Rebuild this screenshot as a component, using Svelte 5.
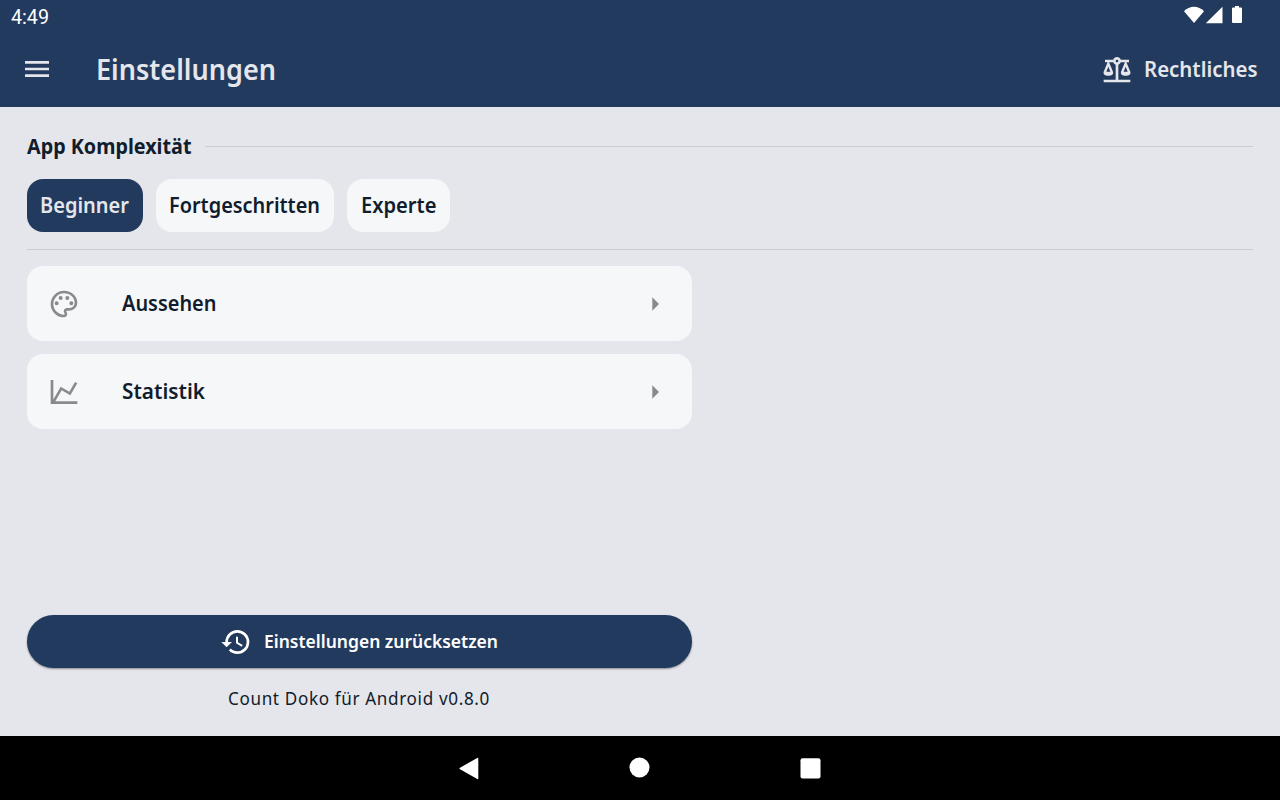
<script>
  const levels = [
    { name: 'Beginner', width: 89, active: true },
    { name: 'Fortgeschritten', width: 151 },
    { name: 'Experte', width: 75.5 }
  ];

  const paths = {
    menu: 'M3 6h18v2H3zM3 11h18v2H3zM3 16h18v2H3z',
    scale: 'M12,3C10.73,3 9.6,3.8 9.18,5H3V7H4.95L2,14C1.53,16 3,17 5.5,17C8,17 9.56,16 9,14L6.05,7H9.17C9.5,7.85 10.15,8.5 11,8.83V20H2V22H22V20H13V8.82C13.85,8.5 14.5,7.85 14.82,7H17.95L15,14C14.53,16 16,17 18.5,17C21,17 22.56,16 22,14L19.05,7H21V5H14.83C14.4,3.8 13.27,3 12,3M12,5A1,1 0 0,1 13,6A1,1 0 0,1 12,7A1,1 0 0,1 11,6A1,1 0 0,1 12,5M5.5,10.25L7,14H4L5.5,10.25M18.5,10.25L20,14H17L18.5,10.25Z',
    palette: 'M12,22A10,10 0 0,1 2,12C2,6.5 6.5,2 12,2C17.5,2 22,6 22,11A6,6 0 0,1 16,17H14.2C13.9,17 13.7,17.2 13.7,17.5C13.7,17.6 13.8,17.7 13.8,17.8C14.2,18.3 14.4,18.9 14.4,19.5C14.5,20.9 13.4,22 12,22M12,4A8,8 0 0,0 4,12A8,8 0 0,0 12,20C12.3,20 12.5,19.8 12.5,19.5C12.5,19.3 12.4,19.2 12.4,19.1C12,18.6 11.8,18.1 11.8,17.5C11.8,16.1 12.9,15 14.3,15H16A4,4 0 0,0 20,11C20,7.1 16.4,4 12,4M6.5,10A1.5,1.5 0 0,1 8,11.5A1.5,1.5 0 0,1 6.5,13A1.5,1.5 0 0,1 5,11.5A1.5,1.5 0 0,1 6.5,10M9.5,6A1.5,1.5 0 0,1 11,7.5A1.5,1.5 0 0,1 9.5,9A1.5,1.5 0 0,1 8,7.5A1.5,1.5 0 0,1 9.5,6M14.5,6A1.5,1.5 0 0,1 16,7.5A1.5,1.5 0 0,1 14.5,9A1.5,1.5 0 0,1 13,7.5A1.5,1.5 0 0,1 14.5,6M17.5,10A1.5,1.5 0 0,1 19,11.5A1.5,1.5 0 0,1 17.5,13A1.5,1.5 0 0,1 16,11.5A1.5,1.5 0 0,1 17.5,10Z',
    chart: 'M16,11.78L20.24,4.45L21.97,5.45L16.74,14.5L10.23,10.75L5.46,19H22V21H2V3H4V17.54L9.5,8L16,11.78Z',
    right: 'M10,17L15,12L10,7V17Z',
    history: 'M13.5,8H12V13L16.28,15.54L17,14.33L13.5,12.25V8M13,3A9,9 0 0,0 4,12H1L4.96,16.03L9,12H6A7,7 0 0,1 13,5A7,7 0 0,1 20,12A7,7 0 0,1 13,19C11.07,19 9.32,18.21 8.06,16.94L6.64,18.36C8.27,20 10.5,21 13,21A9,9 0 0,0 22,12A9,9 0 0,0 13,3'
  };

  const entries = [
    { name: 'Aussehen', width: 94.5, icon: paths.palette },
    { name: 'Statistik', width: 83, icon: paths.chart }
  ];
</script>

{#snippet icon(d)}
  <svg class="icon" viewBox="0 0 24 24"><path {d} fill="currentColor" /></svg>
{/snippet}

{#snippet label(text, width, kind)}
  <svg class="label {kind}" {width} height="30">
    <text x="0" y="23" textLength={width} lengthAdjust="spacingAndGlyphs">{text}</text>
  </svg>
{/snippet}

<div class="screen">
  <div class="status">
    {@render label('4:49', 38, 'clock')}
    <svg class="signals" width="60" height="20" viewBox="0 0 60 20" fill="#fff">
      <path d="M0 7.3C5.6 1.3 14.4 1.3 20 7.3L10 19z" />
      <path d="M38.5 2.700v16.600H21.800z" />
      <path d="M48 4.500q0-1 1-1h2V2h4v1.500h2q1 0 1 1v13.500q0 1-1 1h-8q-1 0-1-1z" />
    </svg>
  </div>

  <header>
    <div class="heading">
      {@render icon(paths.menu)}
      {@render label('Einstellungen', 180, 'title')}
    </div>
    <div class="legal">
      {@render icon(paths.scale)}
      {@render label('Rechtliches', 113.5, 'medium')}
    </div>
  </header>

  <main>
    <div class="section">
      {@render label('App Komplexität', 164.5, 'strong')}
      <div class="rule"></div>
    </div>

    <div class="chips">
      {#each levels as level}
        <div class="chip" class:active={level.active}>
          {@render label(level.name, level.width, 'medium')}
        </div>
      {/each}
    </div>

    <div class="column">
      {#each entries as entry}
        <div class="entry">
          {@render icon(entry.icon)}
          <div class="name">{@render label(entry.name, entry.width, 'medium')}</div>
          {@render icon(paths.right)}
        </div>
      {/each}
      <div class="reset">
        {@render icon(paths.history)}
        {@render label('Einstellungen zurücksetzen', 234, 'button')}
      </div>
      <div class="version">{@render label('Count Doko für Android v0.8.0', 262, 'body')}</div>
    </div>
  </main>

  <nav>
    <svg width="22" height="24" viewBox="0 0 22 24"><path d="M20.300 1.500v20q0 1-1 .4L2 12.300q-1.200-.8 0-1.600L19.200 1q1.100-.6 1.100.5z" fill="#fff" /></svg>
    <svg width="22" height="24" viewBox="0 0 22 24"><circle cx="10.500" cy="10.500" r="10" fill="#fff" /></svg>
    <svg width="22" height="24" viewBox="0 0 22 24"><rect x="0.500" y="1.300" width="20" height="20.300" rx="2" fill="#fff" /></svg>
  </nav>
</div>

<style>
  :global(body) {
    margin: 0;
  }
  .screen {
    width: 1280px;
    height: 800px;
    display: flex;
    flex-direction: column;
    overflow: hidden;
    background: #e5e6eb;
    color: #111c2c;
    font-family: 'Noto Sans', sans-serif;
  }
  svg {
    display: block;
    flex: none;
  }
  .icon {
    width: 32px;
    height: 32px;
  }
  .label {
    overflow: visible;
    fill: currentColor;
  }
  .clock {
    margin-top: 0.500px;
    font: 400 19.500px Roboto, sans-serif;
  }
  .title {
    font-size: 29px;
    font-weight: 600;
  }
  .medium {
    font-size: 21.300px;
    font-weight: 600;
  }
  .strong {
    font-size: 21.300px;
    font-weight: 700;
  }
  .button {
    font-size: 18.300px;
    font-weight: 600;
  }
  .body {
    font-size: 18.300px;
    font-weight: 400;
    letter-spacing: 0.700px;
  }
  .status {
    height: 32px;
    box-sizing: border-box;
    padding: 0 36px 0 11px;
    display: flex;
    justify-content: space-between;
    background: #223a5e;
    color: #fff;
  }
  .signals {
    margin-top: 4px;
  }
  header {
    height: 74.670px;
    box-sizing: border-box;
    padding: 2px 22.500px 0 21px;
    display: flex;
    justify-content: space-between;
    align-items: center;
    background: #223a5e;
    color: #e5e6eb;
  }
  .heading {
    display: flex;
    gap: 43px;
  }
  .heading .label {
    margin-top: 4px;
  }
  .legal {
    height: 32px;
    display: flex;
    gap: 11px;
  }
  .legal .icon {
    margin-top: -1px;
  }
  main {
    flex: 1;
    padding: 0 26.670px;
    display: flex;
    flex-direction: column;
  }
  .section {
    margin-top: 24px;
    height: 31px;
    display: flex;
    gap: 14px;
  }
  .rule {
    flex: 1;
    height: 1px;
    margin-top: 15px;
    background: #cccdd3;
  }
  .chips {
    height: 53.300px;
    padding: 17px 0;
    display: flex;
    gap: 13.300px;
    border-bottom: 1px solid #cccdd3;
  }
  .chip {
    padding: 11px 13.500px 0;
    border-radius: 16px;
    background: #f6f7f9;
  }
  .chip.active {
    background: #223a5e;
    color: #e5e6eb;
  }
  .column {
    width: 665.300px;
    flex: 1;
    display: flex;
    flex-direction: column;
    padding-top: 16.500px;
  }
  .entry {
    height: 74.700px;
    margin-bottom: 13.300px;
    box-sizing: border-box;
    padding: 0 21.300px;
    display: flex;
    align-items: center;
    border-radius: 16px;
    background: #f6f7f9;
  }
  .entry .icon {
    color: #888a8c;
  }
  .name {
    flex: 1;
    margin-left: 42.500px;
    padding-bottom: 2px;
  }
  .reset {
    height: 53.300px;
    margin-top: auto;
    display: flex;
    justify-content: center;
    align-items: center;
    gap: 11px;
    border-radius: 27px;
    background: #223a5e;
    color: #fff;
    box-shadow: 0 1px 2px rgba(0, 0, 0, 0.4);
  }
  .reset .icon {
    margin: 1px 1px 0 -1px;
  }
  .reset .label {
    margin-bottom: 2.500px;
  }
  .version {
    height: 54px;
    padding-top: 14px;
    display: flex;
    justify-content: center;
  }
  nav {
    height: 64px;
    box-sizing: border-box;
    padding-top: 2px;
    display: flex;
    justify-content: center;
    align-items: center;
    gap: 149px;
    background: #000;
  }
</style>
